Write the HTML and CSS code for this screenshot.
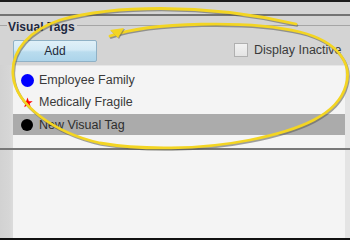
FILE: index.html
```html
<!DOCTYPE html>
<html>
<head>
<meta charset="utf-8">
<link rel="stylesheet" href="styles.css">
</head>
<body>
<div class="screen">
  <div class="topbar"></div>
  <div class="spacer"></div>
  <div class="rule"></div>
  <div class="group">
    <div class="legend">
      <span class="dash"></span>
      <span class="title">Visual Tags</span>
      <span class="line"></span>
    </div>
    <div class="toolbar">
      <button class="add">Add</button>
      <label class="chk"><span class="box"></span><span class="chk-text">Display Inactive</span></label>
    </div>
    <div class="listwrap">
      <div class="gutter"></div>
      <ul class="list">
        <li class="item"><span class="ico"><span class="dot blue"></span></span><span class="txt">Employee Family</span></li>
        <li class="item"><span class="ico"><svg class="star" width="11" height="11" viewBox="0 0 24 24"><path d="M12 1 L14.9 9 L23.4 9.2 L16.7 14.4 L19.1 22.6 L12 17.8 L4.9 22.6 L7.3 14.4 L0.6 9.2 L9.1 9 Z" fill="#ff0000"/></svg></span><span class="txt">Medically Fragile</span></li>
        <li class="item selected"><span class="ico"><span class="dot black"></span></span><span class="txt">New Visual Tag</span></li>
      </ul>
      <div class="rside"></div>
    </div>
  </div>
  <div class="rule2"></div>
  <div class="bottom">
    <div class="gutter"></div>
    <div class="panel"></div>
    <div class="rside"></div>
  </div>
  <div class="botbar"></div>
  <svg class="annot" width="350" height="240" viewBox="0 0 350 240">
    <g fill="none" stroke-linecap="round" stroke-linejoin="round">
      <path class="shadow" d="M 110 36 C 150 22, 250 20, 300 32 C 340 42, 352 65, 346 85 C 338 115, 300 130, 250 140 C 200 150, 140 150, 100 143 C 55 133, 15 105, 13 75 C 11 50, 30 30, 60 20 C 110 6, 200 2, 296 24" transform="translate(1,1.5)"/>
      <path class="stroke" d="M 110 36 C 150 22, 250 20, 300 32 C 340 42, 352 65, 346 85 C 338 115, 300 130, 250 140 C 200 150, 140 150, 100 143 C 55 133, 15 105, 13 75 C 11 50, 30 30, 60 20 C 110 6, 200 2, 296 24"/>
    </g>
    <polygon class="hook-shadow" points="111,31 125,29 119,39"/>
    <polygon class="hook" points="110,30 124,28 118,38"/>
  </svg>
</div>
</body>
</html>
```
FILE: styles.css
```css
* { box-sizing: border-box; }
html, body { margin: 0; padding: 0; }
body { background: #d4d4d4; font-family: "Liberation Sans", Arial, sans-serif; }
.screen { position: relative; width: 350px; height: 240px; overflow: hidden; display: flex; flex-direction: column; background: #d4d4d4; }
.topbar { height: 2px; background: #1c1c1c; }
.spacer { height: 12px; }
.rule { height: 2px; background: #737373; }
.group { display: flex; flex-direction: column; }
.legend { height: 20px; display: flex; align-items: center; }
.dash { width: 7px; height: 1px; background: #a5a5a5; margin-top: -2px; }
.title { font-weight: bold; font-size: 12px; color: #1d2840; padding: 0 2px 0 1px; margin-top: 1px; letter-spacing: 0.1px; }
.line { flex: 1; height: 1px; background: #a5a5a5; margin-top: -2px; }
.toolbar { height: 29px; display: flex; align-items: flex-start; padding-top: 4px; }
.add { margin: 0 0 0 13px; width: 84px; height: 22px; padding: 0; border: 1px solid #8fb1c6; border-radius: 2px; background: linear-gradient(#e0f0f8 0%, #d2e9f5 45%, #b9dcee 55%, #acd4ea 100%); font-family: "Liberation Sans", Arial, sans-serif; font-size: 12px; color: #1e2838; }
.chk { display: flex; align-items: center; margin-left: 137px; margin-top: 3px; font-size: 12.5px; color: #3a3a3a; white-space: nowrap; }
.box { width: 14px; height: 14px; border: 1px solid #b0b0b0; background: linear-gradient(#f2f2f2, #e4e4e4); margin-right: 6px; }
.listwrap { height: 83px; display: flex; }
.gutter { width: 13px; background: linear-gradient(90deg, #d2d2d2 0%, #d6d6d6 70%, #dcdcdc 100%); }
.list { flex: 1; margin: 0; padding: 3px 0 0 0; list-style: none; background: #f4f4f4; border-top: 1px solid #e6e6e6; }
.item { height: 22px; display: flex; align-items: center; font-size: 12.5px; color: #3a3a3a; }
.item.selected { background: #ababab; height: 21px; margin-top: 1px; color: #2e2e2e; }
.ico { width: 20px; margin-left: 4px; margin-right: 2px; display: flex; align-items: center; justify-content: center; }
.dot { display: block; border-radius: 50%; }
.dot.blue { width: 13px; height: 13px; background: #0000ff; }
.dot.black { width: 12px; height: 12px; background: #000; }
.star { display: block; }
.rside { width: 5px; background: #e4e4e4; }
.rule2 { height: 2px; background: #787878; }
.bottom { height: 88px; display: flex; }
.panel { flex: 1; background: #f4f4f4; }
.botbar { height: 2px; background: #111; }
.annot { position: absolute; left: 0; top: 0; pointer-events: none; }
.shadow { stroke: #5a5a50; stroke-opacity: 0.55; stroke-width: 2.6; }
.stroke { stroke: #f3d523; stroke-width: 2.8; }
.hook { fill: #f3d523; }
.hook-shadow { fill: #5a5a50; fill-opacity: 0.5; }
```
